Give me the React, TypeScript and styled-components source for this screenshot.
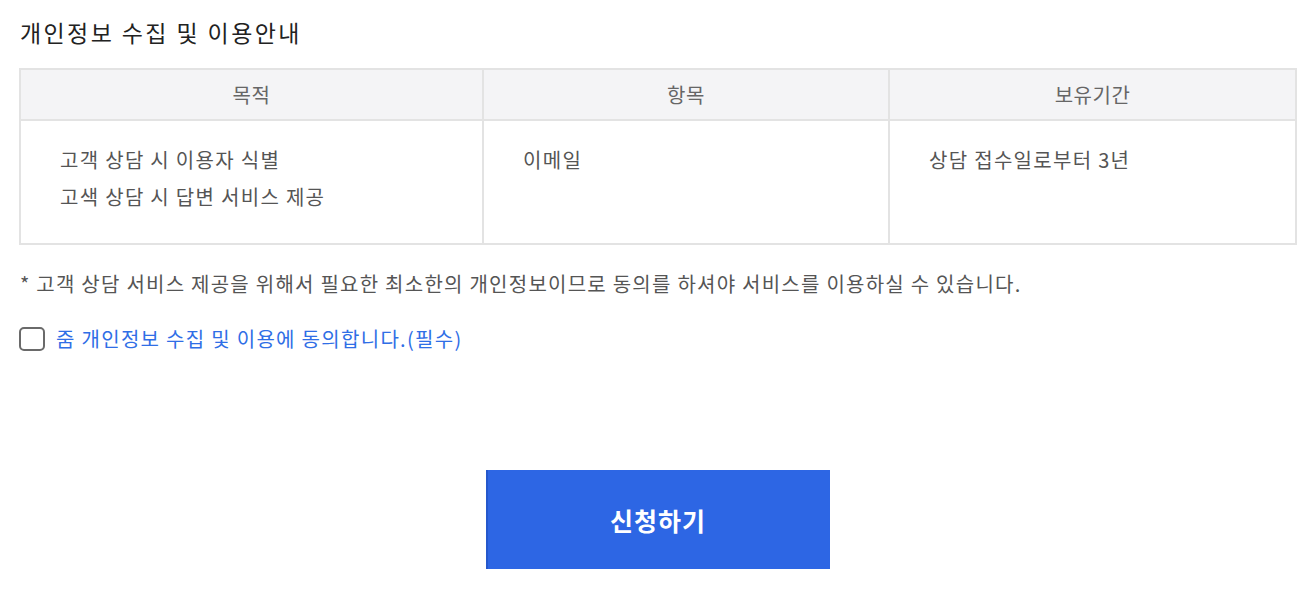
import React from "react";
import styled, { createGlobalStyle } from "styled-components";

const Global = createGlobalStyle`
  html, body { margin: 0; padding: 0; background: #fff; }
  body { font-family: "Noto Sans CJK KR", "Noto Sans", sans-serif; }
`;

const Page = styled.div`
  padding: 14px 17px 0 19px;
  display: flex;
  flex-direction: column;
`;

const Title = styled.h2`
  margin: 0 0 0 1px;
  font-size: 23px;
  font-weight: 400;
  color: #222;
  line-height: 36px;
  letter-spacing: 2.4px;
`;

const Table = styled.table`
  margin-top: 18px;
  width: 1276px;
  border-collapse: collapse;
  table-layout: fixed;
  border: 2px solid #e3e3e3;
`;

const Th = styled.th`
  height: 49px;
  background: #f4f4f6;
  border: 2px solid #e3e3e3;
  font-size: 20px;
  font-weight: 400;
  color: #666;
  text-align: center;
  padding: 0;
  letter-spacing: 0.5px;
`;

const Td = styled.td`
  vertical-align: top;
  border: 2px solid #e3e3e3;
  padding: 20px 0 0 39px;
  height: 102px;
  font-size: 20px;
  line-height: 37px;
  color: #555;
  letter-spacing: 1.3px;
`;

const Line = styled.div``;

const Note = styled.p`
  margin: 24px 0 0 1px;
  font-size: 20px;
  line-height: 30px;
  color: #555;
  letter-spacing: 1.25px;
`;

const CheckRow = styled.label`
  margin-top: 25px;
  display: flex;
  align-items: center;
  gap: 11px;
  cursor: pointer;
`;

const Box = styled.span`
  width: 22px;
  height: 20px;
  border: 2px solid #6a6a6a;
  border-radius: 5px;
  flex: none;
`;

const CheckText = styled.span`
  font-size: 20px;
  color: #2f6ee6;
  line-height: 30px;
  letter-spacing: 1.3px;
`;

const ButtonWrap = styled.div`
  display: flex;
  justify-content: center;
  margin-top: 116px;
`;

const Submit = styled.button`
  width: 344px;
  height: 99px;
  border: none;
  background: #2d66e4;
  box-shadow: inset 2px 0 0 #2558cc, 0 2px 0 #b9c6e6;
  color: #fff;
  font-family: inherit;
  font-size: 25px;
  font-weight: 700;
  letter-spacing: 1px;
  margin-left: 2px;
  cursor: pointer;
`;

export default function App() {
  return (
    <>
      <Global />
      <Page>
        <Title>개인정보 수집 및 이용안내</Title>
        <Table>
          <colgroup>
            <col style={{ width: 463 }} />
            <col style={{ width: 406 }} />
            <col style={{ width: 407 }} />
          </colgroup>
          <thead>
            <tr>
              <Th>목적</Th>
              <Th>항목</Th>
              <Th>보유기간</Th>
            </tr>
          </thead>
          <tbody>
            <tr>
              <Td>
                <Line>고객 상담 시 이용자 식별</Line>
                <Line>고색 상담 시 답변 서비스 제공</Line>
              </Td>
              <Td>이메일</Td>
              <Td>상담 접수일로부터 3년</Td>
            </tr>
          </tbody>
        </Table>
        <Note>* 고객 상담 서비스 제공을 위해서 필요한 최소한의 개인정보이므로 동의를 하셔야 서비스를 이용하실 수 있습니다.</Note>
        <CheckRow>
          <Box />
          <CheckText>줌 개인정보 수집 및 이용에 동의합니다.(필수)</CheckText>
        </CheckRow>
        <ButtonWrap>
          <Submit>신청하기</Submit>
        </ButtonWrap>
      </Page>
    </>
  );
}
